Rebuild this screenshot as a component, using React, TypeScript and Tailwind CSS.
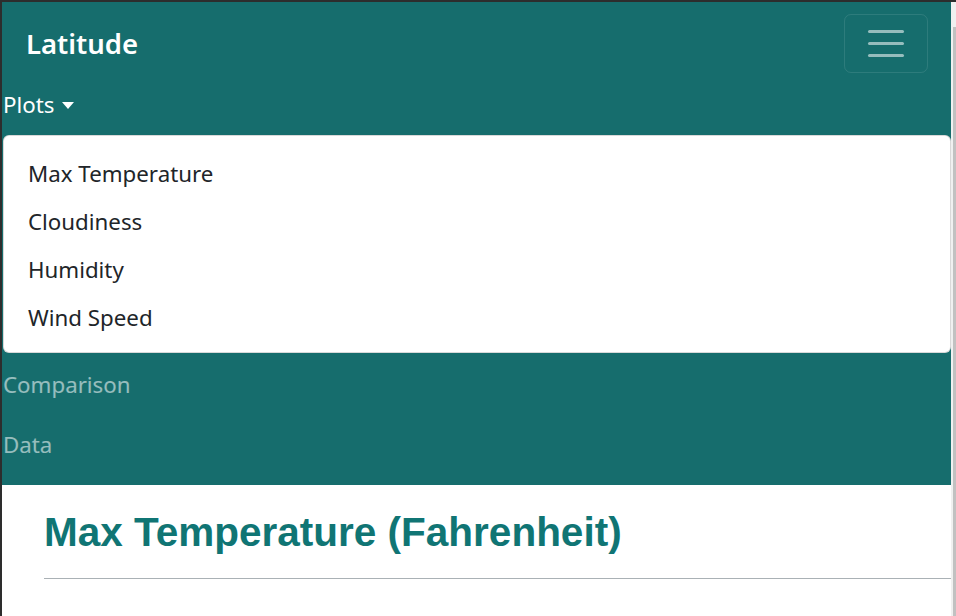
import React from 'react';

// Navbar (collapsed, dropdown open) + page header
const SANS = "font-['Noto_Sans',sans-serif]";

const PLOTS = ['Max Temperature', 'Cloudiness', 'Humidity', 'Wind Speed'];

function Toggler() {
  return (
    <button className="flex h-[59px] w-[84px] flex-col items-center justify-center gap-[9px] rounded-[7px] border border-white/10">
      <span className="block h-[3px] w-[36px] rounded-full bg-white/55" />
      <span className="block h-[3px] w-[36px] rounded-full bg-white/55" />
      <span className="block h-[3px] w-[36px] rounded-full bg-white/55" />
    </button>
  );
}

export default function App() {
  return (
    <div className={`flex h-[616px] w-[956px] overflow-hidden bg-[#2d2d2d] pl-[2px] pt-[2px] ${SANS}`}>
      <main className="flex-1 bg-white">
        <nav className="bg-[#166d6d] pb-[12px] pt-[12px]">
          <div className="flex items-center justify-between pl-[24px] pr-[23px]">
            <a className="text-[27.5px] font-semibold leading-[36px] text-white">Latitude</a>
            <Toggler />
          </div>

          <ul className="mt-[2px] text-[22.3px] leading-[36px]">
            <li>
              <a className="flex items-center py-[12px] pl-[1px] text-white">
                Plots
                <span className="ml-[8px] h-0 w-0 border-x-[6px] border-t-[7px] border-x-transparent border-t-white" />
              </a>
              <div className="ml-[1px] rounded-[6px] border border-black/15 bg-white pb-[10px] pt-[14px]">
                {PLOTS.map((p) => (
                  <a key={p} className="block px-[24px] py-[6px] text-[#212529]">
                    {p}
                  </a>
                ))}
              </div>
            </li>
            <li>
              <a className="block pb-[10px] pl-[1px] pt-[14px] text-white/55">Comparison</a>
            </li>
            <li>
              <a className="block pb-[10px] pl-[1px] pt-[14px] text-white/55">Data</a>
            </li>
          </ul>
        </nav>

        <section className="pl-[42px]">
          <h1 className="mt-[22px] font-['Liberation_Sans',Arial,sans-serif] text-[40.5px] font-bold leading-[50px] text-[#107574]">
            Max Temperature (Fahrenheit)
          </h1>
          <hr className="mt-[21px] border-t border-[#aab1b5]" />
        </section>
      </main>

      {/* scrollbar */}
      <div className="flex w-[5px] flex-col bg-[#f0f0f0]">
        <div className="h-[25px]" />
        <div className="ml-[2px] flex-1 bg-[#c1c1c1]" />
      </div>
    </div>
  );
}
